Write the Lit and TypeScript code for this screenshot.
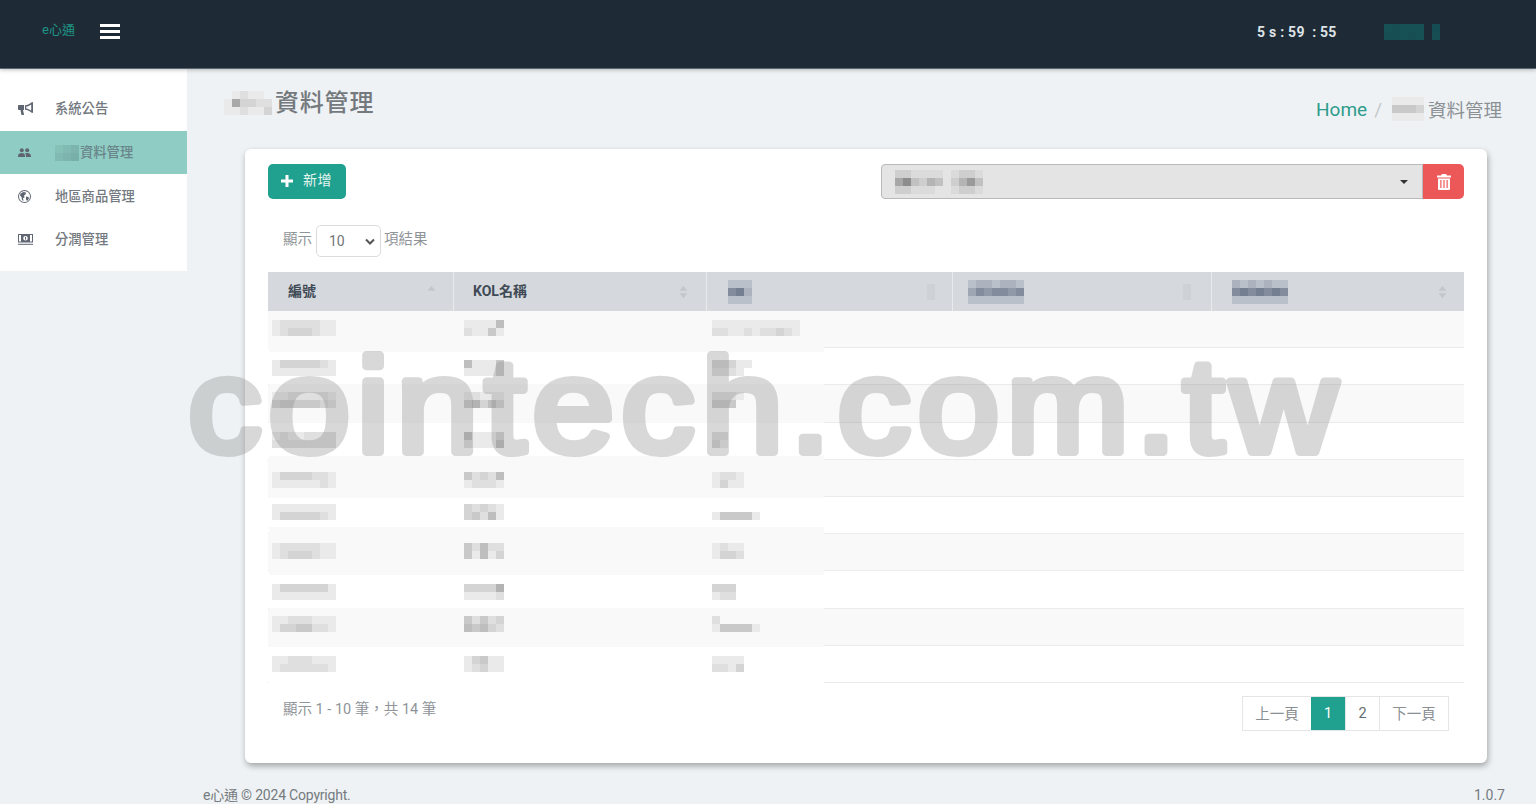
import { LitElement, html, css, svg } from "lit";
import { customElement } from "lit/decorators.js";

const gray = (d: number, tint = false) => {
  if (tint) return `rgb(${200 - d * 14},${205 - d * 13},${212 - d * 11})`;
  const g = 245 - d * 11;
  return `rgb(${g},${g},${g})`;
};

const mosaic = (data: string, tint = false, color?: (d: number) => string) => html`<span class="mosaic">${data
  .split("|")
  .map(
    (line) => html`<span class="mline">${[...line].map((c) => {
      const d = Number(c);
      return html`<i style="background:${d === 0 ? "transparent" : color ? color(d) : gray(d, tint)}"></i>`;
    })}</span>`,
  )}</span>`;

const bands = [
  { h: 41, off: 9, a: "12222211|12333211", b: "11115|21141", c: "11111111111|22112122321" },
  { h: 32, off: 8, a: "13333321|11111111", b: "51114|11114", c: "33311|22210" },
  { h: 39, off: 8, a: "11222221|34444432", b: "12111|46353", c: "2221|4440" },
  { h: 33, off: 9, a: "12112222|22222222", b: "51113|21115", c: "220|310" },
  { h: 42, off: 16, a: "13333221|11111121", b: "42325|12221", c: "1221|1311" },
  { h: 29, off: 6, a: "11111111|13333321", b: "32321|34251", c: "000000|144441" },
  { h: 48, off: 16, a: "12222211|12333211", b: "42522|41513", c: "1211|1332" },
  { h: 33, off: 9, a: "13333331|11111111", b: "33336|11112", c: "333|122" },
  { h: 39, off: 8, a: "11222111|13344221", b: "42423|54532", c: "200000|144441" },
  { h: 36, off: 9, a: "11222111|12222221", b: "13411|12311", c: "1111|2213" },
];

const sortIcon = (upOnly = false) => html`<svg class="sort" viewBox="0 0 10 16" width="9" height="14">
  <path d="M5 1 9.500 6.500H.5Z"></path>${upOnly ? "" : svg`<path d="M5 15 .5 9.500h9Z"></path>`}
</svg>`;
const paleBlock = mosaic("1|1", false, () => "#ced2d6");

@customElement("app-root")
export class AppRoot extends LitElement {
  static styles = css`
    :host {
      display: block;
      position: relative;
      width: 1536px;
      height: 804px;
      overflow: hidden;
      background: #eef2f4;
      font-family: Roboto, "Noto Sans CJK TC", sans-serif;
      color: #7a7f85;
      font-size: 14px;
    }
    .mosaic { display: inline-flex; flex-direction: column; flex: none; filter: blur(0.6px); }
    .mline { display: flex; }
    .mline i { display: block; width: 8px; height: 8px; }

    header {
      height: 69px;
      box-sizing: border-box;
      padding-bottom: 5px;
      background: #1e2b37;
      border-bottom: 1px solid #5a6670;
      box-shadow: 0 1px 4px rgba(0,0,0,.25);
      display: flex;
      align-items: center;
      position: relative;
      z-index: 1;
    }
    .logo { margin-left: 42px; width: 58px; color: #1f9484; font-size: 13px; line-height: 16px; margin-bottom: 3px; }
    .burger { display: flex; flex-direction: column; gap: 3px; width: 20px; }
    .burger span { height: 3px; background: #fff; }
    .clock { margin-left: auto; color: #dfe3e6; font-weight: 700; font-size: 14px; letter-spacing: .25px; width: 127px; white-space: pre; }
    .user { display: flex; gap: 8px; margin-right: 96px; }

    .body { display: flex; align-items: flex-start; }
    aside {
      width: 187px;
      flex: none;
      background: #fff;
      padding: 18px 0 0;
      box-sizing: border-box;
      height: 202px;
    }
    .item {
      height: 43.7px;
      display: flex;
      align-items: center;
      font-size: 13.3px;
      font-weight: 500;
      color: #737980;
    }
    .item .tx { margin-bottom: 2px; }
    .item .ic { width: 55px; flex: none; display: flex; justify-content: flex-start; padding-left: 18px; box-sizing: border-box; }
    .item svg { fill: #5f6672; display: block; }
    .item.active { background: #8fcdc4; }
    .item.active .tx { margin-left: 1px; color: #69858a; }

    main { flex: 1; min-width: 0; position: relative; }
    .heading {
      height: 80px;
      display: flex;
      justify-content: space-between;
      padding: 18px 34px 0 37px;
      box-sizing: border-box;
    }
    .title { display: flex; align-items: flex-start; font-size: 24px; font-weight: 500; letter-spacing: .8px; color: #74797d; line-height: 32px; }
    .title .mosaic { margin-top: 4px; margin-right: 3px; }
    .crumbs { display: flex; align-items: center; height: 44px; font-size: 18.5px; color: #8b9094; }
    .crumbs a { color: #2e9c8c; font-size: 19px; }
    .crumbs .sep { color: #c4c8cb; margin: 0 10px 0 7px; font-size: 19px; }
    .crumbs .mosaic { margin-right: 4px; }

    .card {
      margin-left: 58px;
      width: 1242px;
      height: 614px;
      background: #fff;
      border-radius: 6px;
      box-shadow: 1px 3px 6px rgba(0,0,0,.32);
      box-sizing: border-box;
      padding: 15px 23px;
    }
    .toolbar { display: flex; justify-content: space-between; height: 35px; }
    .add {
      width: 78px;
      background: #20a08e;
      border-radius: 5px;
      color: #e4f4f1;
      font-size: 14px;
      display: flex;
      align-items: center;
      gap: 10px;
      padding-left: 13px;
      box-sizing: border-box;
      letter-spacing: .6px;
    }
    .add span { margin-bottom: 4px; line-height: 20px; }
    .add svg { margin-bottom: 1px; }
    .picker { display: flex; width: 583px; }
    .picksel {
      flex: 1;
      background: #e4e4e4;
      border: 1px solid #b9b9b9;
      border-radius: 4px 0 0 4px;
      display: flex;
      align-items: center;
      padding: 0 13px;
      justify-content: space-between;
    }
    .caret { width: 0; height: 0; border: 4px solid transparent; border-top: 4px solid #333; border-bottom: 0; margin-right: 1px; }
    .trash { width: 41px; background: #ec5757; border-radius: 0 5px 5px 0; display: flex; align-items: center; justify-content: center; }

    .length { display: flex; align-items: center; height: 32px; margin-top: 26px; padding-left: 15px; gap: 4px; color: #8f9498; font-size: 14.5px; }
    .length > span { margin-bottom: 7px; }
    .len-sel {
      width: 65px;
      height: 32px;
      box-sizing: border-box;
      border: 1px solid #d9dbdd;
      border-radius: 5px;
      display: flex;
      align-items: center;
      justify-content: space-between;
      padding: 0 5px 0 12px;
      margin-right: -1px;
      color: #6f7478;
      font-size: 14px;
    }

    .table { position: relative; margin-top: 15px; }
    .thead { display: grid; grid-template-columns: 185px 253px 246px 259px 253px; height: 39px; background: #d5d9de; }
    .th {
      display: flex;
      align-items: center;
      justify-content: space-between;
      padding: 0 17px 0 20px;
      border-left: 1px solid #e8ebee;
      font-weight: 700;
      font-size: 14px;
      color: #3f4a55;
    }
    .th > span:not(.mosaic) { margin-bottom: 4px; }
    .th:first-child { border-left: 0; }
    .th:nth-child(2) { padding-left: 19px; padding-right: 18px; }
    .th:nth-child(3) { padding-left: 21px; padding-right: 17px; }
    .th:nth-child(4) { padding-left: 15px; padding-right: 20px; }
    .th:nth-child(5) { padding-left: 20px; }
    .sort { fill: #c2c7cc; flex: none; }
    .row { height: 37.2px; box-sizing: border-box; border-bottom: 1px solid #e9ebec; }
    .row:nth-child(odd) { background: #f9f9f9; }

    .mask { position: absolute; left: 1px; top: 39px; width: 555px; display: flex; flex-direction: column; }
    .band { background: #fff; box-sizing: border-box; display: flex; align-items: flex-start; }
    .band:nth-child(odd) { background: #f9f9f9; }
    .band .c1 { margin-left: 3px; width: 192px; flex: none; display: flex; }
    .band .c2 { width: 248px; flex: none; display: flex; }
    .band .c3 { display: flex; }

    .foot { display: flex; justify-content: space-between; padding: 13px 15px 0; }
    .info { color: #8f9498; font-size: 14.5px; line-height: 26px; margin-top: 1px; }
    .pager { display: flex; height: 35px; border: 1px solid #e3e5e7; box-sizing: border-box; color: #8a8f93; font-size: 14.5px; }
    .pg { display: flex; align-items: center; justify-content: center; border-left: 1px solid #e3e5e7; box-sizing: border-box; padding-bottom: 2px; }
    .pg:first-child { border-left: 0; width: 68px; }
    .pg.n { width: 34px; color: #666c71; padding-bottom: 0; }
    .pg.on { background: #20a08e; color: #fff; border-left: 0; }
    .pg.last { width: 69px; }

    footer { display: flex; justify-content: space-between; padding: 23px 31px 0 16px; font-size: 14px; color: #757b80; line-height: 18px; }
    footer span:first-child { letter-spacing: -.2px; }

    .watermark { position: absolute; left: 0; top: 0; width: 1536px; height: 804px; opacity: .33; pointer-events: none; z-index: 2; }
    .watermark text {
      font-family: "Liberation Sans", sans-serif;
      font-weight: 400;
      font-size: 134px;
      letter-spacing: 6px;
      fill: #8a8a8a;
      stroke: #8a8a8a;
      stroke-width: 8px;
      stroke-linejoin: round;
    }
  `;

  render() {
    const menu = [
      { t: "系統公告", i: this.bullhorn() },
      { t: "資料管理", i: this.users(), active: true },
      { t: "地區商品管理", i: this.globe() },
      { t: "分潤管理", i: this.money() },
    ];
    const teal = (d: number) => `rgb(${20 + d},${72 + d * 3},${80 + d * 2})`;
    const pick = (d: number) => { const g = 232 - d * 13; return `rgb(${g},${g},${g})`; };
    return html`
      <header>
        <div class="logo">e心通</div>
        <div class="burger"><span></span><span></span><span></span></div>
        <div class="clock">5 s : 59  : 55</div>
        <div class="user">${mosaic("32333|22323", false, teal)}${mosaic("1|2", false, teal)}</div>
      </header>
      <div class="body">
        <aside>
          ${menu.map(
            (m) => html`<div class="item ${m.active ? "active" : ""}">
              <div class="ic">${m.i}</div>
              ${m.active ? mosaic("123|234", false, (d) => `rgba(110,160,155,${0.15 + d * 0.13})`) : ""}
              <span class="tx">${m.t}</span>
            </div>`,
          )}
        </aside>
        <main>
          <div class="heading">
            <div class="title">${mosaic("012110|173322|112113")}<span>資料管理</span></div>
            <div class="crumbs">
              <a>Home</a><span class="sep">/</span>${mosaic("1111|4443|1111")}<span>資料管理</span>
            </div>
          </div>
          <div class="card">
            <div class="toolbar">
              <div class="add">
                <svg width="12" height="12" viewBox="0 0 12 12"><path fill="#fff" d="M4.500 0h3v4.500h4.500v3H7.500V12h-3V7.500H0v-3h4.500Z"></path></svg>
                <span>新增</span>
              </div>
              <div class="picker">
                <div class="picksel">
                  ${mosaic("221111012210|573243024630|221110012210", false, pick)}
                  <span class="caret"></span>
                </div>
                <div class="trash">
                  <svg width="14" height="16" viewBox="0 0 14 16" fill="#fff"><path d="M5 0h4l1 1.500h4v2H0v-2h4Z"></path><path d="M1 4.500h12V15a1 1 0 0 1-1 1H2a1 1 0 0 1-1-1Zm2.300 1.500v8h1.200V6Zm3.100 0v8h1.200V6Zm3.100 0v8h1.200V6Z"></path></svg>
                </div>
              </div>
            </div>
            <div class="length">
              <span>顯示</span>
              <div class="len-sel"><span>10</span>
                <svg width="10" height="7" viewBox="0 0 10 7"><path d="M1 1.500 5 5.500 9 1.500" fill="none" stroke="#555" stroke-width="2"></path></svg>
              </div>
              <span>項結果</span>
            </div>
            <div class="table">
              <div class="thead">
                <div class="th"><span>編號</span>${sortIcon(true)}</div>
                <div class="th"><span>KOL名稱</span>${sortIcon()}</div>
                <div class="th">${mosaic("1110|5620|1110", true)}${paleBlock}</div>
                <div class="th">${mosaic("1221221|3545545|1111111", true)}${paleBlock}</div>
                <div class="th">${mosaic("2121211|5656565|1111111", true)}${sortIcon()}</div>
              </div>
              <div class="tbody">
                ${bands.map(() => html`<div class="row"></div>`)}
              </div>
              <div class="mask">
                ${bands.map(
                  (b) => html`<div class="band" style="height:${b.h}px;padding-top:${b.off}px">
                    <div class="c1">${mosaic(b.a)}</div>
                    <div class="c2">${mosaic(b.b)}</div>
                    <div class="c3">${mosaic(b.c)}</div>
                  </div>`,
                )}
              </div>
            </div>
            <div class="foot">
              <div class="info">顯示 1 - 10 筆，共 14 筆</div>
              <div class="pager">
                <div class="pg">上一頁</div>
                <div class="pg n on">1</div>
                <div class="pg n">2</div>
                <div class="pg last">下一頁</div>
              </div>
            </div>
          </div>
          <footer><span>e心通 © 2024 Copyright.</span><span>1.0.7</span></footer>
        </main>
      </div>
      <svg class="watermark" viewBox="0 0 1536 804"><text transform="translate(188 452) scale(1.1 1)">cointech.com.tw</text></svg>
    `;
  }

  bullhorn() {
    return html`<svg width="15" height="13" viewBox="0 0 15 13"><path d="M14 0c.6 0 1 .4 1 1v9c0 .6-.4 1-1 1-2-2-4.500-3-7-3.200V3.200C9.500 3 12 2 14 0Zm-.8 2.400C11.500 3.600 10 4.300 8.300 4.600v1.800c1.700.3 3.200 1 4.900 2.200Z"></path><path d="M1 3h5v5H5l1 4.500c.1.300-.1.500-.4.500H3.800c-.2 0-.4-.1-.4-.3L2.500 8H1c-.6 0-1-.4-1-1V4c0-.6.400-1 1-1Z"></path></svg>`;
  }
  users() {
    return html`<svg width="13" height="9" viewBox="0 0 13 9"><circle cx="3.800" cy="2.300" r="2"></circle><circle cx="9.200" cy="2.300" r="2"></circle><path d="M0 8c0-2 1.500-3 3.800-3S7 6 7 8v1H0ZM8 9V8c0-1-.3-2-.9-2.800C7.600 5 8.400 5 9.200 5 11.500 5 13 6 13 8v1Z"></path></svg>`;
  }
  globe() {
    return html`<svg width="13" height="13" viewBox="0 0 13 13"><path fill-rule="evenodd" d="M6.500 0a6.500 6.500 0 1 1 0 13 6.500 6.500 0 0 1 0-13Zm0 1a5.500 5.500 0 1 0 0 11 5.500 5.500 0 0 0 0-11Z"></path><path d="M2.500 3.500 5.500 2 8 2.500 7.500 4.500 6 5.500l.5 2L5 8 5.500 11 4 10 3.500 7 2 5.500ZM8 6.500l2.500.5.500 1.500-2 2.500-1-1.500Z"></path></svg>`;
  }
  money() {
    return html`<svg width="15" height="11" viewBox="0 0 15 11"><path fill-rule="evenodd" d="M0 0h15v8.500H0Zm1 1v6.500h2V1Zm11 0v6.500h2V1ZM7.500 2a2.300 2.300 0 1 0 0 4.600 2.300 2.300 0 0 0 0-4.600Z"></path><rect y="9.800" width="15" height="1"></rect><rect x="7" y="3" width="1" height="2.600"></rect></svg>`;
  }
}
